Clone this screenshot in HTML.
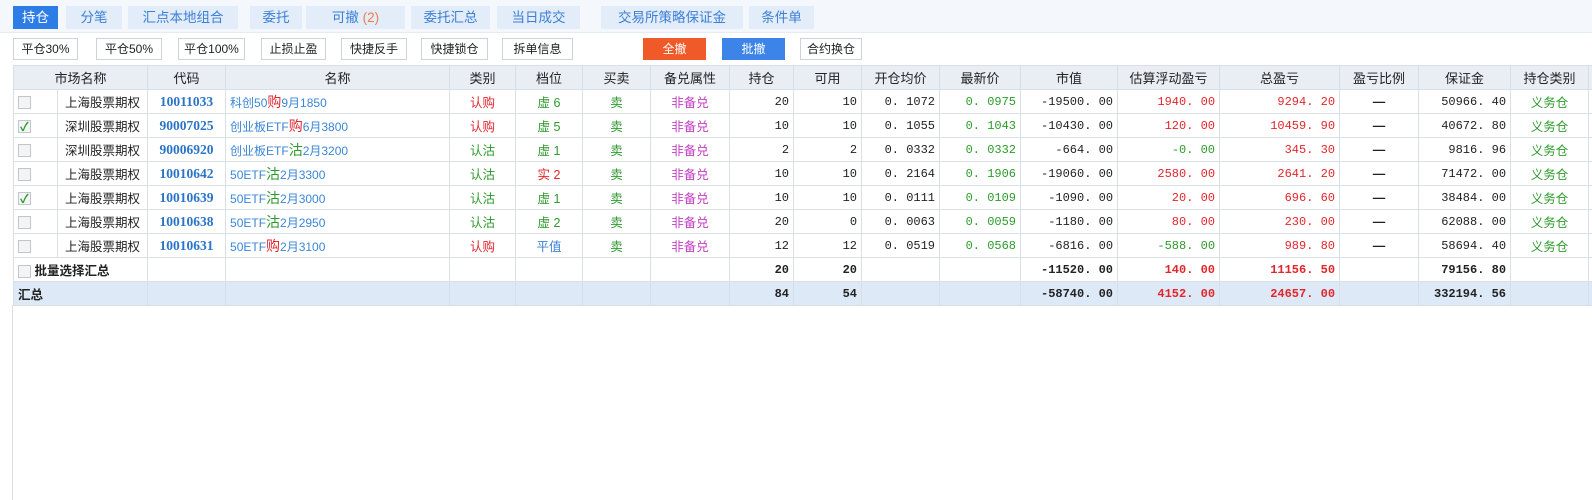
<!DOCTYPE html><html><head><meta charset="utf-8"><style>
*{margin:0;padding:0;box-sizing:border-box}
body{width:1592px;height:500px;background:#fff;font-family:"Liberation Sans","Noto Sans CJK SC",sans-serif;font-size:13px;color:#222;position:relative;overflow:hidden}
.bar{position:absolute;left:0;top:0;width:1592px;height:33px;background:#f4f7fb;border-bottom:1px solid #e6ebf2}
.tab{position:absolute;top:6px;height:23px;line-height:23px;text-align:center;background:#e3edf9;color:#3b7fd6;font-size:13.5px}
.tab.on{background:#2e7de6;color:#fff}
.btn{position:absolute;top:38px;height:22px;line-height:20px;text-align:center;border:1px solid #cdd3da;background:#fff;font-size:12px;color:#222}
table{position:absolute;left:13px;top:65px;border-collapse:collapse;table-layout:fixed;width:1605px}
td{height:24px;border:1px solid #d9dfe7;white-space:nowrap;overflow:hidden;padding:0 4px;font-size:12.5px}
tr.h td{background:#e9eef4;text-align:center;font-size:13px;color:#222}
.n{text-align:right;font-family:"Liberation Mono","Noto Sans CJK SC",monospace;font-size:12px}
.c{text-align:center}
.code{color:#2a74c8;font-weight:bold;font-family:"Liberation Serif",serif;font-size:13.5px;text-align:center}
.nm{color:#3b86d6;font-size:12px}
.red{color:#e2252b}.grn{color:#2c9a2c}.pur{color:#c03ec0}.blu{color:#3b7fd6}
.cb{display:inline-block;width:13px;height:13px;border:1px solid #bfc6cf;background:#f4f4f4;vertical-align:middle;position:relative}
.cb.k::after{content:"✓";position:absolute;left:1px;top:-3px;color:#2a9a2a;font-size:12px;font-weight:bold}
.b{font-weight:bold}
tr.t td{background:#dde9f7}
</style></head><body>
<div class="bar">
<div class="tab on" style="left:13px;width:45px">持仓</div>
<div class="tab" style="left:66px;width:56px">分笔</div>
<div class="tab" style="left:128px;width:110px">汇点本地组合</div>
<div class="tab" style="left:250px;width:52px">委托</div>
<div class="tab" style="left:306px;width:99px">可撤 <span style="color:#f07a50">(2)</span></div>
<div class="tab" style="left:411px;width:79px">委托汇总</div>
<div class="tab" style="left:497px;width:83px">当日成交</div>
<div class="tab" style="left:601px;width:142px">交易所策略保证金</div>
<div class="tab" style="left:749px;width:65px">条件单</div>
</div>
<div class="btn" style="left:13px;width:65px">平仓30%</div>
<div class="btn" style="left:96px;width:66px">平仓50%</div>
<div class="btn" style="left:178px;width:67px">平仓100%</div>
<div class="btn" style="left:261px;width:65px">止损止盈</div>
<div class="btn" style="left:341px;width:66px">快捷反手</div>
<div class="btn" style="left:421px;width:67px">快捷锁仓</div>
<div class="btn" style="left:502px;width:71px">拆单信息</div>
<div class="btn" style="left:643px;width:63px;background:#f05a28;border-color:#f05a28;color:#fff">全撤</div>
<div class="btn" style="left:722px;width:63px;background:#3d84e8;border-color:#3d84e8;color:#fff">批撤</div>
<div class="btn" style="left:800px;width:62px">合约换仓</div>
<table>
<colgroup><col style="width:44px"><col style="width:90px"><col style="width:78px"><col style="width:224px"><col style="width:66px"><col style="width:67px"><col style="width:68px"><col style="width:79px"><col style="width:64px"><col style="width:68px"><col style="width:78px"><col style="width:81px"><col style="width:97px"><col style="width:102px"><col style="width:120px"><col style="width:79px"><col style="width:92px"><col style="width:78px"><col style="width:30px"></colgroup>
<tr class="h"><td colspan="2">市场名称</td><td>代码</td><td>名称</td><td>类别</td><td>档位</td><td>买卖</td><td>备兑属性</td><td>持仓</td><td>可用</td><td>开仓均价</td><td>最新价</td><td>市值</td><td>估算浮动盈亏</td><td>总盈亏</td><td>盈亏比例</td><td>保证金</td><td>持仓类别</td><td></td></tr>
<tr><td><span class="cb"></span></td><td class="c">上海股票期权</td><td class="code">10011033</td><td class="nm">科创50<span class="red" style="font-size:14px">购</span>9月1850</td><td class="c red">认购</td><td class="c grn">虚 6</td><td class="c grn">卖</td><td class="c pur">非备兑</td><td class="n">20</td><td class="n">10</td><td class="n">0. 1072</td><td class="n grn">0. 0975</td><td class="n">-19500. 00</td><td class="n red">1940. 00</td><td class="n red">9294. 20</td><td class="c b">—</td><td class="n">50966. 40</td><td class="c grn">义务仓</td><td></td></tr>
<tr><td><span class="cb k"></span></td><td class="c">深圳股票期权</td><td class="code">90007025</td><td class="nm">创业板ETF<span class="red" style="font-size:14px">购</span>6月3800</td><td class="c red">认购</td><td class="c grn">虚 5</td><td class="c grn">卖</td><td class="c pur">非备兑</td><td class="n">10</td><td class="n">10</td><td class="n">0. 1055</td><td class="n grn">0. 1043</td><td class="n">-10430. 00</td><td class="n red">120. 00</td><td class="n red">10459. 90</td><td class="c b">—</td><td class="n">40672. 80</td><td class="c grn">义务仓</td><td></td></tr>
<tr><td><span class="cb"></span></td><td class="c">深圳股票期权</td><td class="code">90006920</td><td class="nm">创业板ETF<span class="grn" style="font-size:14px">沽</span>2月3200</td><td class="c grn">认沽</td><td class="c grn">虚 1</td><td class="c grn">卖</td><td class="c pur">非备兑</td><td class="n">2</td><td class="n">2</td><td class="n">0. 0332</td><td class="n grn">0. 0332</td><td class="n">-664. 00</td><td class="n grn">-0. 00</td><td class="n red">345. 30</td><td class="c b">—</td><td class="n">9816. 96</td><td class="c grn">义务仓</td><td></td></tr>
<tr><td><span class="cb"></span></td><td class="c">上海股票期权</td><td class="code">10010642</td><td class="nm">50ETF<span class="grn" style="font-size:14px">沽</span>2月3300</td><td class="c grn">认沽</td><td class="c red">实 2</td><td class="c grn">卖</td><td class="c pur">非备兑</td><td class="n">10</td><td class="n">10</td><td class="n">0. 2164</td><td class="n grn">0. 1906</td><td class="n">-19060. 00</td><td class="n red">2580. 00</td><td class="n red">2641. 20</td><td class="c b">—</td><td class="n">71472. 00</td><td class="c grn">义务仓</td><td></td></tr>
<tr><td><span class="cb k"></span></td><td class="c">上海股票期权</td><td class="code">10010639</td><td class="nm">50ETF<span class="grn" style="font-size:14px">沽</span>2月3000</td><td class="c grn">认沽</td><td class="c grn">虚 1</td><td class="c grn">卖</td><td class="c pur">非备兑</td><td class="n">10</td><td class="n">10</td><td class="n">0. 0111</td><td class="n grn">0. 0109</td><td class="n">-1090. 00</td><td class="n red">20. 00</td><td class="n red">696. 60</td><td class="c b">—</td><td class="n">38484. 00</td><td class="c grn">义务仓</td><td></td></tr>
<tr><td><span class="cb"></span></td><td class="c">上海股票期权</td><td class="code">10010638</td><td class="nm">50ETF<span class="grn" style="font-size:14px">沽</span>2月2950</td><td class="c grn">认沽</td><td class="c grn">虚 2</td><td class="c grn">卖</td><td class="c pur">非备兑</td><td class="n">20</td><td class="n">0</td><td class="n">0. 0063</td><td class="n grn">0. 0059</td><td class="n">-1180. 00</td><td class="n red">80. 00</td><td class="n red">230. 00</td><td class="c b">—</td><td class="n">62088. 00</td><td class="c grn">义务仓</td><td></td></tr>
<tr><td><span class="cb"></span></td><td class="c">上海股票期权</td><td class="code">10010631</td><td class="nm">50ETF<span class="red" style="font-size:14px">购</span>2月3100</td><td class="c red">认购</td><td class="c blu">平值</td><td class="c grn">卖</td><td class="c pur">非备兑</td><td class="n">12</td><td class="n">12</td><td class="n">0. 0519</td><td class="n grn">0. 0568</td><td class="n">-6816. 00</td><td class="n grn">-588. 00</td><td class="n red">989. 80</td><td class="c b">—</td><td class="n">58694. 40</td><td class="c grn">义务仓</td><td></td></tr>
<tr><td colspan="2" class="b"><span class="cb"></span> 批量选择汇总</td><td></td><td></td><td></td><td></td><td></td><td></td><td class="n b">20</td><td class="n b">20</td><td></td><td></td><td class="n b">-11520. 00</td><td class="n b red">140. 00</td><td class="n b red">11156. 50</td><td></td><td class="n b">79156. 80</td><td></td><td></td></tr>
<tr class="t"><td colspan="2" class="b">汇总</td><td></td><td></td><td></td><td></td><td></td><td></td><td class="n b">84</td><td class="n b">54</td><td></td><td></td><td class="n b">-58740. 00</td><td class="n b red">4152. 00</td><td class="n b red">24657. 00</td><td></td><td class="n b">332194. 56</td><td></td><td></td></tr>
</table>
<div style="position:absolute;left:12px;top:305px;width:1px;height:195px;background:#d9dfe7"></div>
</body></html>
